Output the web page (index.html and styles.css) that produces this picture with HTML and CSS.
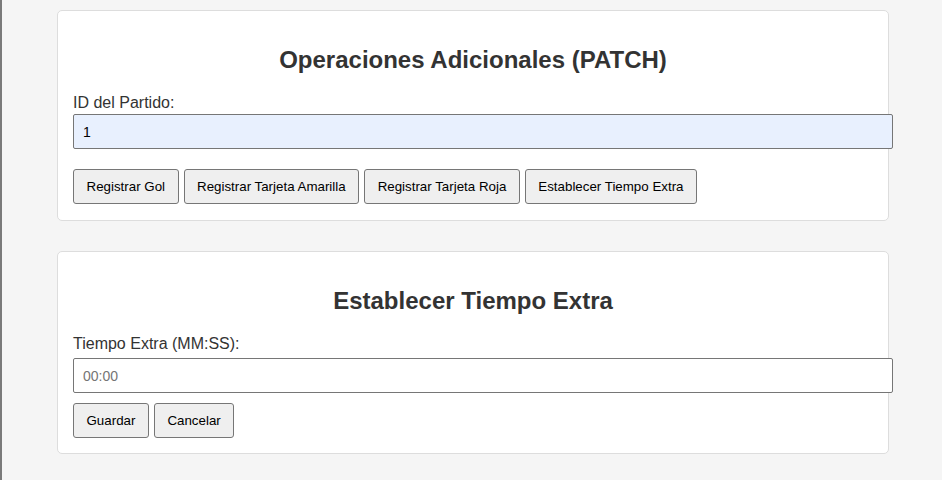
FILE: index.html
```html
<!DOCTYPE html>
<html lang="es">
<head>
<meta charset="utf-8">
<title>Operaciones Adicionales</title>
<link rel="stylesheet" href="styles.css">
</head>
<body>
<div class="page">
  <section class="card card-ops">
    <h2 class="card-title">Operaciones Adicionales (PATCH)</h2>
    <label class="field-label" for="partido">ID del Partido:</label>
    <input class="field-input autofilled" id="partido" type="text" value="1">
    <div class="actions">
      <button class="btn" type="button">Registrar Gol</button>
      <button class="btn" type="button">Registrar Tarjeta Amarilla</button>
      <button class="btn" type="button">Registrar Tarjeta Roja</button>
      <button class="btn" type="button">Establecer Tiempo Extra</button>
    </div>
  </section>
  <section class="card card-extra">
    <h2 class="card-title">Establecer Tiempo Extra</h2>
    <label class="field-label" for="extra">Tiempo Extra (MM:SS):</label>
    <input class="field-input" id="extra" type="text" placeholder="00:00">
    <div class="actions">
      <button class="btn" type="button">Guardar</button>
      <button class="btn" type="button">Cancelar</button>
    </div>
  </section>
</div>
</body>
</html>
```
FILE: styles.css
```css
html {
  background: #f5f5f5;
}
body {
  margin: 0;
  min-height: 480px;
  border-left: 2px solid #7a7a7a;
  background: #f5f5f5;
  font-family: "Liberation Sans", Arial, sans-serif;
  color: #333;
  padding-left: 2px;
}
.page {
  width: 832px;
  margin: 0 auto;
  padding-top: 10px;
}
.card {
  background: #fff;
  border: 1px solid #dddddd;
  border-radius: 5px;
  padding: 15px;
}
.card-ops {
  padding-bottom: 16px;
}
.card + .card {
  margin-top: 30px;
}
.card-title {
  font-size: 24px;
  font-weight: bold;
  text-align: center;
  margin: 20px 0;
  color: #333;
}
.field-label {
  display: block;
  font-size: 16px;
  line-height: 18px;
  color: #333;
}
.field-input {
  display: block;
  box-sizing: border-box;
  width: 820px;
  height: 35px;
  padding: 0 9px;
  border: 1px solid #767676;
  border-radius: 2px;
  font-family: "Liberation Sans", Arial, sans-serif;
  font-size: 14px;
  color: #000;
  background: #fff;
  outline: none;
}
.field-input::placeholder {
  color: #757575;
}
.field-input.autofilled {
  background: #e8f0fe;
}
.card-ops .field-label {
  margin-top: 1px;
}
.card-ops .field-input {
  margin-top: 2px;
  margin-bottom: 20px;
}
.card-extra .field-label {
  margin-top: 3px;
}
.card-extra .field-input {
  margin-top: 5px;
  margin-bottom: 10px;
}
.actions {
  display: flex;
  gap: 5px;
}
.btn {
  box-sizing: border-box;
  height: 35px;
  padding: 0 12.5px;
  font-family: "Liberation Sans", Arial, sans-serif;
  font-size: 13.333px;
  color: #000;
  background: #efefef;
  border: 1px solid #767676;
  border-radius: 3px;
}
```
